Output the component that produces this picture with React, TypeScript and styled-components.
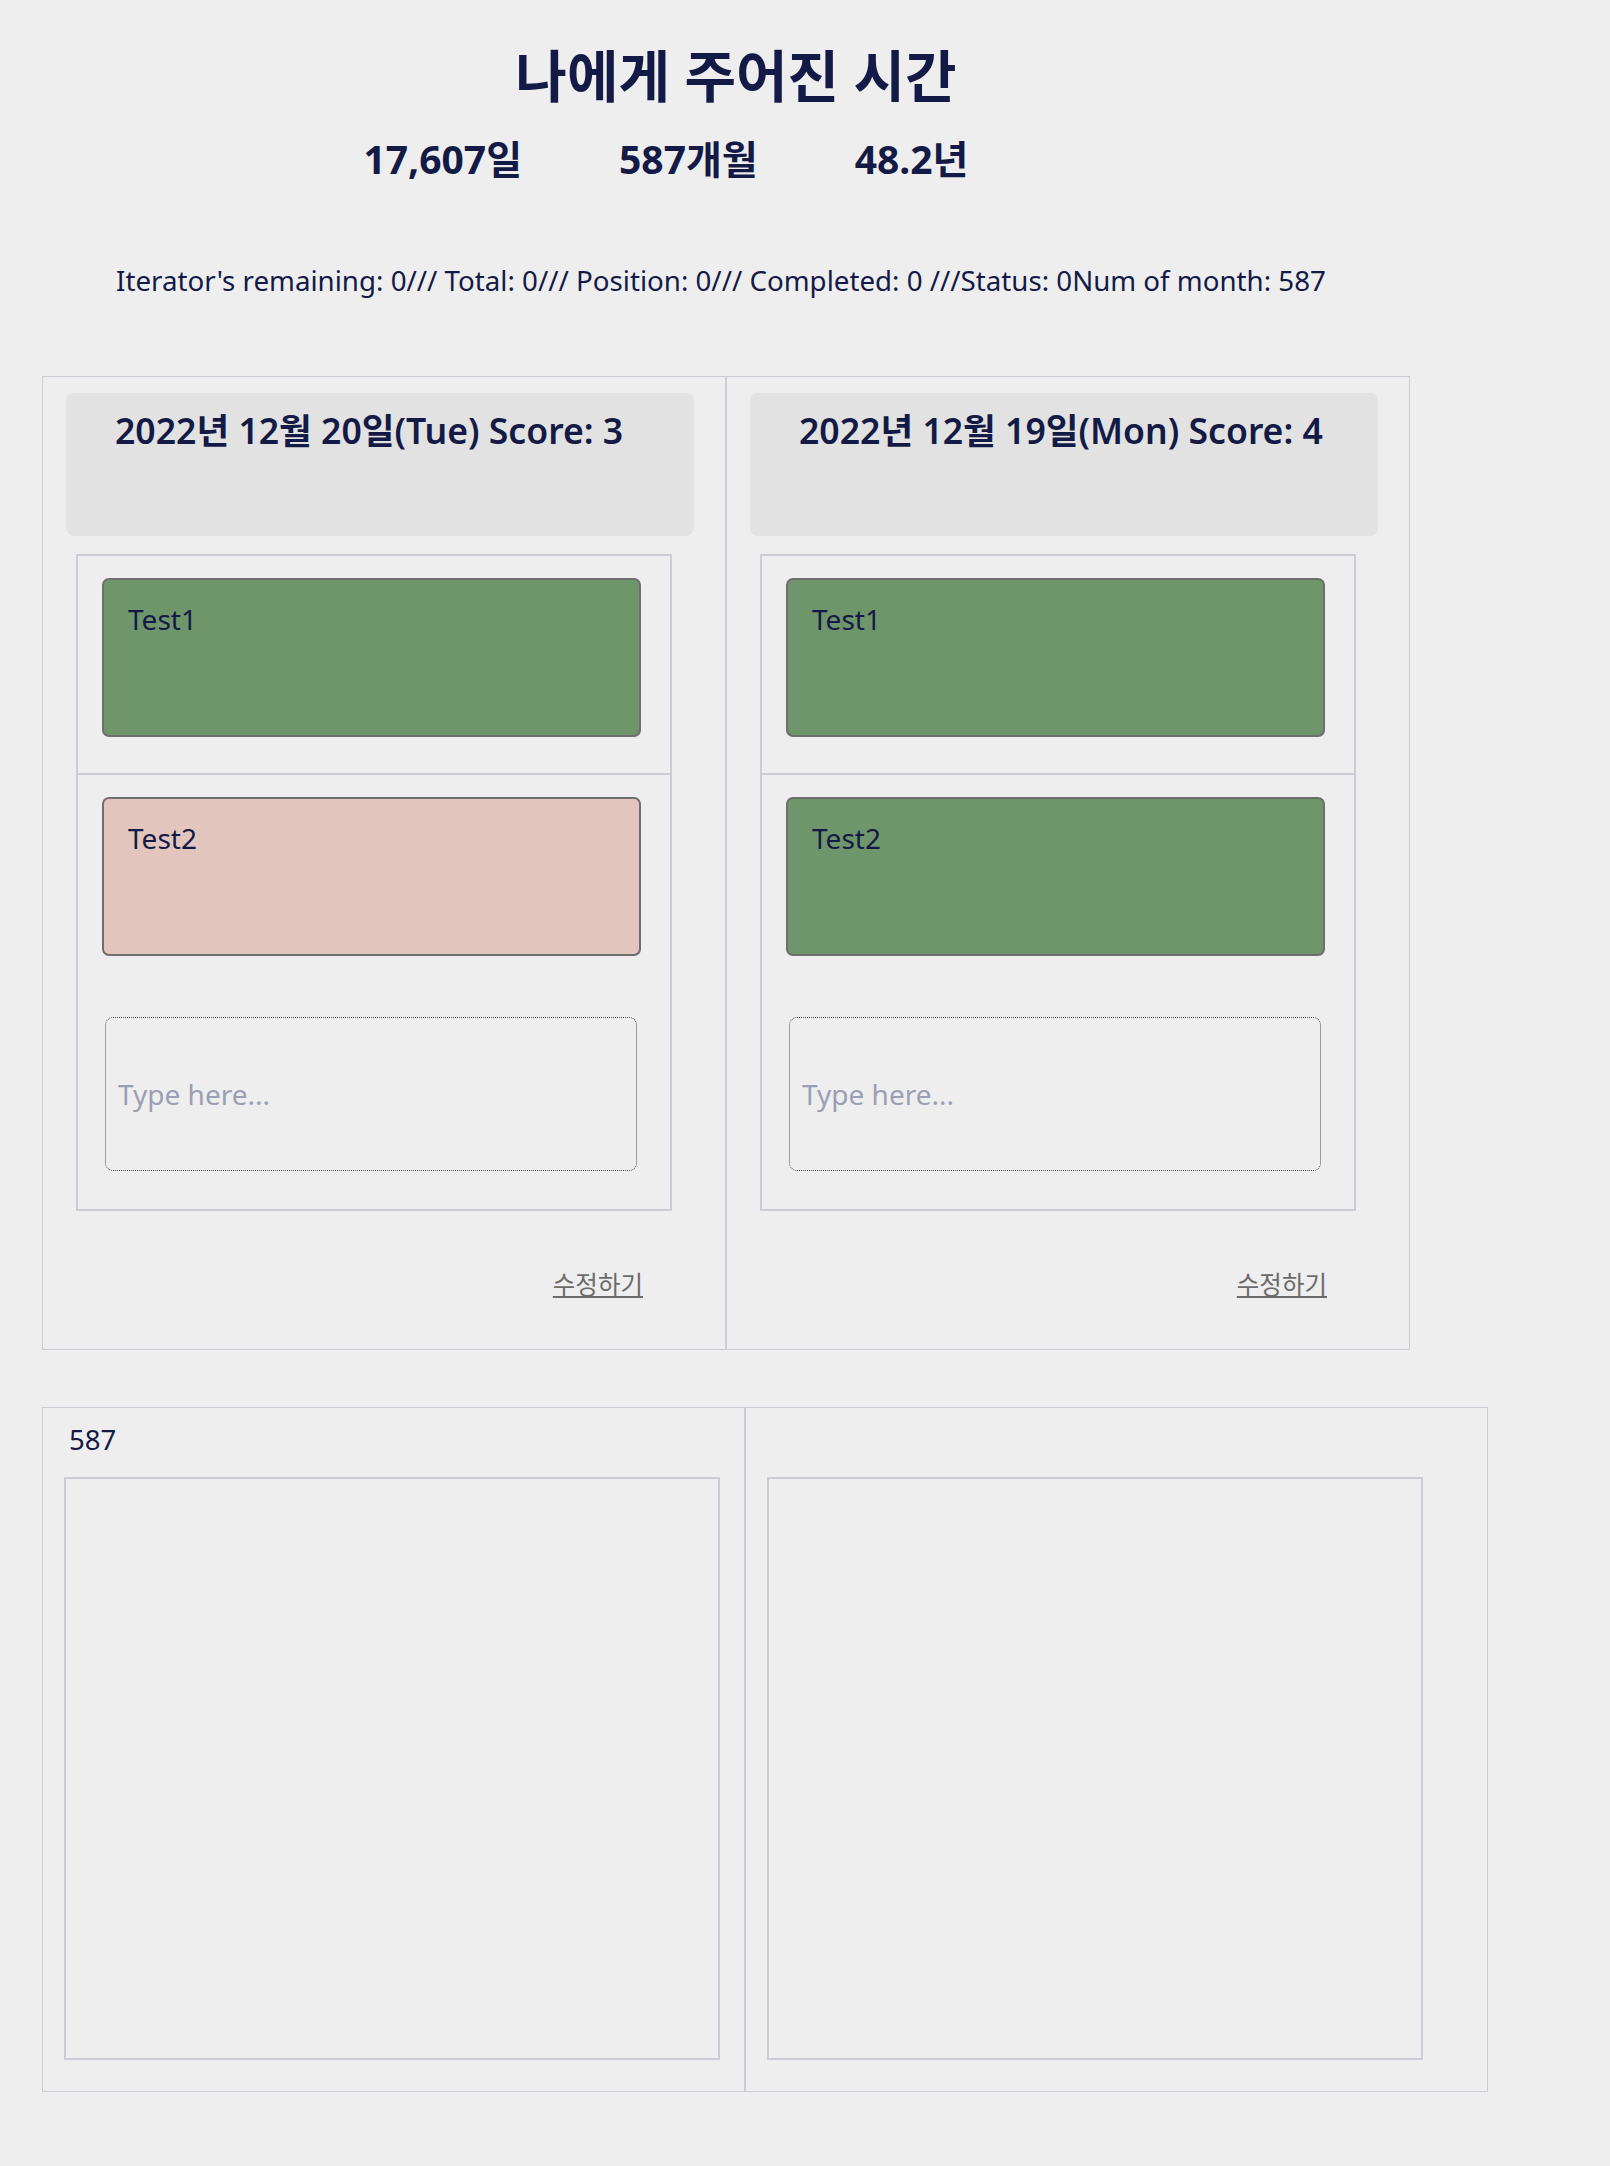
import React from "react";
import styled, { createGlobalStyle } from "styled-components";

const GlobalStyle = createGlobalStyle`
  html, body {
    margin: 0;
    padding: 0;
    background: #eeeeee;
  }
  body {
    font-family: "Noto Sans", "Noto Sans CJK KR", sans-serif;
    color: #131a46;
  }
  * { box-sizing: border-box; }
`;

const Page = styled.div`
  width: 1610px;
  min-height: 2166px;
  background: #eeeeee;
  overflow: hidden;
`;

const Header = styled.header`
  width: 1472px;
  display: flex;
  flex-direction: column;
  align-items: center;
  padding-top: 45px;
`;

const Title = styled.h1`
  margin: 0;
  font-size: 56px;
  font-weight: 700;
  line-height: 60px;
`;

const Stats = styled.div`
  display: flex;
  gap: 97px;
  margin: 28px 140px 0 0;
`;

const Stat = styled.span`
  font-size: 39px;
  font-weight: 700;
  line-height: 52px;
`;

const StatusLine = styled.p`
  margin: 79px 0 0;
  padding-left: 116px;
  font-size: 27.7px;
  line-height: 32px;
`;

const DayGrid = styled.section`
  display: grid;
  grid-template-columns: 684px 684px;
  margin: 80px 0 0 42px;
  width: max-content;
`;

const DayColumn = styled.div`
  display: flex;
  flex-direction: column;
  align-items: flex-start;
  border: 1px solid #cdccd4;
  padding: 16px 0 0 23px;
`;

const DayHeader = styled.div`
  width: 628px;
  height: 143px;
  background: #e2e2e2;
  border-radius: 8px;
  padding: 13px 0 0 49px;
`;

const DayTitle = styled.h2`
  margin: 0;
  font-size: 35.6px;
  font-weight: 600;
  line-height: 48px;
`;

const TaskBox = styled.div`
  width: 596px;
  margin: 18px 0 0 10px;
  border: 2px solid #cdccd4;
`;

const TaskRow = styled.div<{ $divided?: boolean }>`
  padding: 22px 0 36px 24px;
  border-bottom: ${(p) => (p.$divided ? "2px solid #cdccd4" : "none")};
`;

const TaskCard = styled.div<{ $tone: "done" | "missed" }>`
  width: 539px;
  height: 159px;
  border: 2px solid #6e6e6e;
  border-radius: 7px;
  background: ${(p) => (p.$tone === "done" ? "#6f956a" : "#e2c5bd")};
  padding: 21px 24px;
  font-size: 28px;
  line-height: 36px;
`;

const InputRow = styled.div`
  padding: 25px 0 38px 27px;
`;

const TaskInput = styled.input`
  display: block;
  width: 532px;
  height: 154px;
  border: 1px dotted #4a4a4a;
  border-radius: 8px;
  background: transparent;
  padding: 0 12px;
  font-family: inherit;
  font-size: 28px;
  color: #131a46;
  outline: none;
  &::placeholder {
    color: #9b9fb4;
  }
`;

const Footer = styled.div`
  width: 596px;
  margin-left: 10px;
  text-align: right;
  padding: 59px 29px 46px 0;
  line-height: 30px;
`;

const EditLink = styled.a`
  font-size: 24.5px;
  color: #6b6b6b;
  text-decoration: underline;
  cursor: pointer;
`;

const MonthGrid = styled.section`
  display: grid;
  grid-template-columns: 703px 743px;
  margin: 57px 0 0 42px;
  width: max-content;
`;

const MonthColumn = styled.div`
  border: 1px solid #cdccd4;
  padding: 14px 0 31px 21px;
`;

const MonthLabel = styled.div`
  height: 36px;
  padding-left: 5px;
  margin-bottom: 19px;
  font-size: 27.5px;
  line-height: 36px;
`;

const MonthBox = styled.div`
  width: 656px;
  height: 583px;
  border: 2px solid #cdccd4;
`;

type Task = { name: string; done: boolean };
type Day = { title: string; tasks: Task[] };

const days: Day[] = [
  {
    title: "2022년 12월 20일(Tue) Score: 3",
    tasks: [
      { name: "Test1", done: true },
      { name: "Test2", done: false },
    ],
  },
  {
    title: "2022년 12월 19일(Mon) Score: 4",
    tasks: [
      { name: "Test1", done: true },
      { name: "Test2", done: true },
    ],
  },
];

export default function App() {
  return (
    <Page>
      <GlobalStyle />
      <Header>
        <Title>나에게 주어진 시간</Title>
        <Stats>
          <Stat>17,607일</Stat>
          <Stat>587개월</Stat>
          <Stat>48.2년</Stat>
        </Stats>
      </Header>
      <StatusLine>
        Iterator's remaining: 0/// Total: 0/// Position: 0/// Completed: 0 ///Status: 0Num of month: 587
      </StatusLine>
      <DayGrid>
        {days.map((day) => (
          <DayColumn key={day.title}>
            <DayHeader>
              <DayTitle>{day.title}</DayTitle>
            </DayHeader>
            <TaskBox>
              {day.tasks.map((t, i) => (
                <TaskRow key={t.name} $divided={i === 0}>
                  <TaskCard $tone={t.done ? "done" : "missed"}>{t.name}</TaskCard>
                </TaskRow>
              ))}
              <InputRow>
                <TaskInput placeholder="Type here..." />
              </InputRow>
            </TaskBox>
            <Footer>
              <EditLink>수정하기</EditLink>
            </Footer>
          </DayColumn>
        ))}
      </DayGrid>
      <MonthGrid>
        <MonthColumn>
          <MonthLabel>587</MonthLabel>
          <MonthBox />
        </MonthColumn>
        <MonthColumn>
          <MonthLabel />
          <MonthBox />
        </MonthColumn>
      </MonthGrid>
    </Page>
  );
}
